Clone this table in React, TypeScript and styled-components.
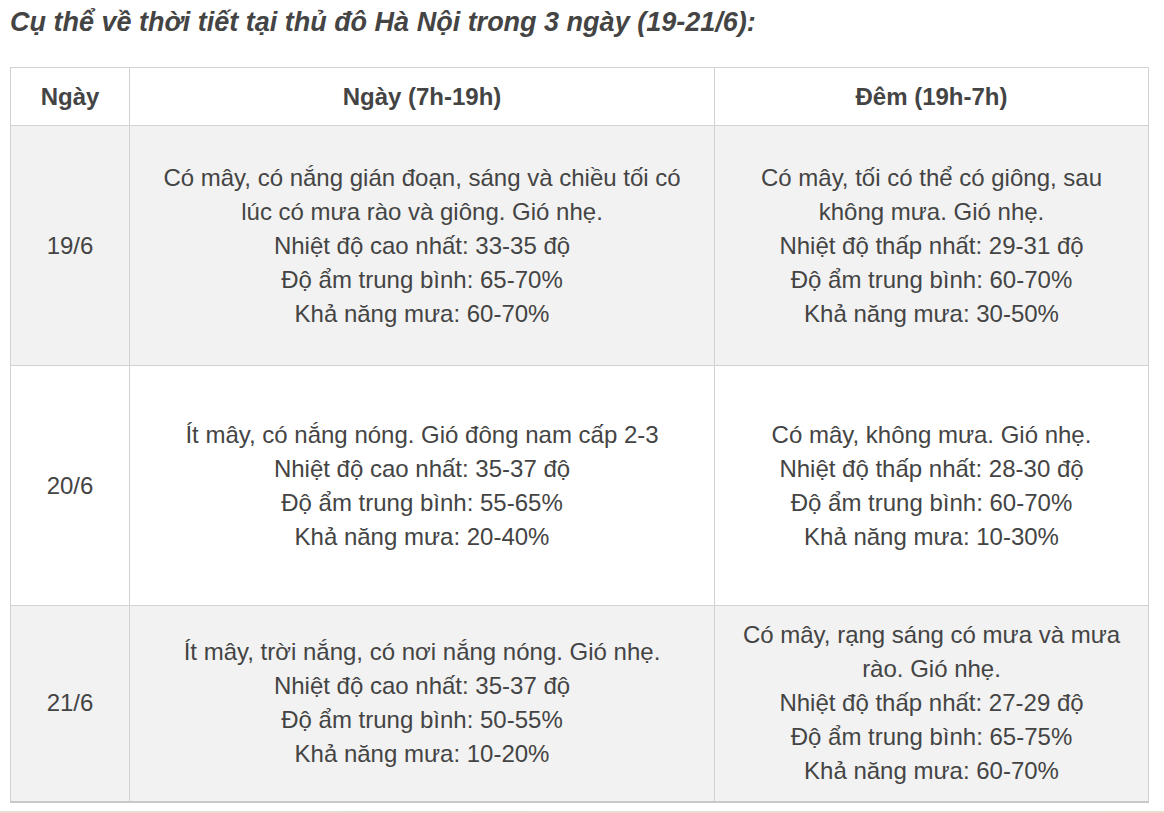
import { createGlobalStyle, styled } from 'styled-components'

const GlobalStyle = createGlobalStyle`
  html, body {
    margin: 0;
    padding: 0;
    background: #fff;
  }
  body {
    font-family: 'Liberation Sans', Arial, sans-serif;
    color: #444;
  }
`

type Row = {
  day: string
  daytime: string[]
  night: string[]
  height: number
  shaded: boolean
}

const rows: Row[] = [
  {
    day: '19/6',
    daytime: [
      'Có mây, có nắng gián đoạn, sáng và chiều tối có',
      'lúc có mưa rào và giông. Gió nhẹ.',
      'Nhiệt độ cao nhất: 33-35 độ',
      'Độ ẩm trung bình: 65-70%',
      'Khả năng mưa: 60-70%',
    ],
    night: [
      'Có mây, tối có thể có giông, sau',
      'không mưa. Gió nhẹ.',
      'Nhiệt độ thấp nhất: 29-31 độ',
      'Độ ẩm trung bình: 60-70%',
      'Khả năng mưa: 30-50%',
    ],
    height: 240,
    shaded: true,
  },
  {
    day: '20/6',
    daytime: [
      'Ít mây, có nắng nóng. Gió đông nam cấp 2-3',
      'Nhiệt độ cao nhất: 35-37 độ',
      'Độ ẩm trung bình: 55-65%',
      'Khả năng mưa: 20-40%',
    ],
    night: [
      'Có mây, không mưa. Gió nhẹ.',
      'Nhiệt độ thấp nhất: 28-30 độ',
      'Độ ẩm trung bình: 60-70%',
      'Khả năng mưa: 10-30%',
    ],
    height: 240,
    shaded: false,
  },
  {
    day: '21/6',
    daytime: [
      'Ít mây, trời nắng, có nơi nắng nóng. Gió nhẹ.',
      'Nhiệt độ cao nhất: 35-37 độ',
      'Độ ẩm trung bình: 50-55%',
      'Khả năng mưa: 10-20%',
    ],
    night: [
      'Có mây, rạng sáng có mưa và mưa',
      'rào. Gió nhẹ.',
      'Nhiệt độ thấp nhất: 27-29 độ',
      'Độ ẩm trung bình: 65-75%',
      'Khả năng mưa: 60-70%',
    ],
    height: 196,
    shaded: true,
  },
]

const Lines = ({ items }: { items: string[] }) => (
  <>
    {items.map((line, i) => (
      <Line key={i}>{line}</Line>
    ))}
  </>
)

export default function App() {
  return (
    <>
      <GlobalStyle />
      <Page>
        <Title>Cụ thể về thời tiết tại thủ đô Hà Nội trong 3 ngày (19-21/6):</Title>
        <Table>
          <colgroup>
            <col style={{ width: 119 }} />
            <col style={{ width: 585 }} />
            <col style={{ width: 434 }} />
          </colgroup>
          <thead>
            <tr>
              <HeadCell>Ngày</HeadCell>
              <HeadCell>Ngày (7h-19h)</HeadCell>
              <HeadCell>Đêm (19h-7h)</HeadCell>
            </tr>
          </thead>
          <tbody>
            {rows.map((row) => (
              <BodyRow key={row.day} $shaded={row.shaded} style={{ height: row.height }}>
                <Cell>{row.day}</Cell>
                <Cell>
                  <Lines items={row.daytime} />
                </Cell>
                <Cell>
                  <Lines items={row.night} />
                </Cell>
              </BodyRow>
            ))}
          </tbody>
        </Table>
      </Page>
      <Strip />
    </>
  )
}

const Page = styled.div`
  padding: 7px 16px 0 10px;
`

const Title = styled.h3`
  margin: 0;
  font-size: 27px;
  line-height: 30px;
  font-weight: 700;
  font-style: italic;
  color: #444;
`

const Table = styled.table`
  margin-top: 30px;
  width: 1138px;
  border-collapse: collapse;
  table-layout: fixed;
  border-bottom: 2px solid #c8c8c8;
`

const HeadCell = styled.th`
  height: 57px;
  padding: 0;
  border: 1px solid #d2d2d2;
  background: #fff;
  font-size: 24px;
  font-weight: 700;
  color: #444;
  text-align: center;
  vertical-align: middle;
`

const BodyRow = styled.tr<{ $shaded: boolean }>`
  background: ${({ $shaded }) => ($shaded ? '#f2f2f2' : '#fff')};
`

const Cell = styled.td`
  padding: 0 10px;
  border: 1px solid #d2d2d2;
  font-size: 24px;
  line-height: 34px;
  color: #444;
  text-align: center;
  vertical-align: middle;
`

const Line = styled.div`
  white-space: nowrap;
`

const Strip = styled.div`
  margin-top: 8px;
  height: 6px;
  background: linear-gradient(90deg, #e9ddd4 0%, #e6dcd6 30%, #ebdcd0 100%);
`
